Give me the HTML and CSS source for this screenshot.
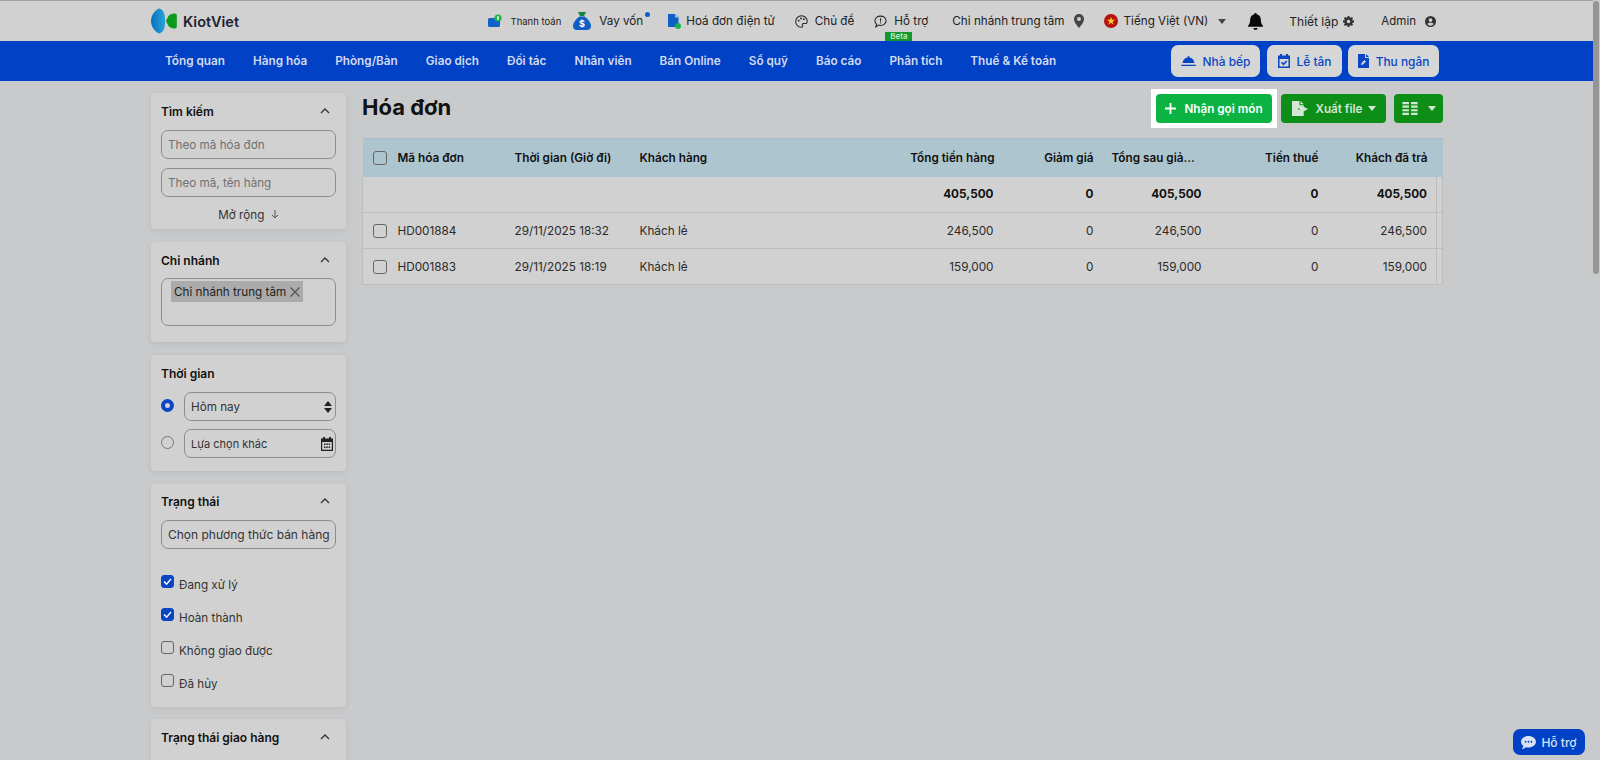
FILE: index.html
```html
<!DOCTYPE html>
<html lang="vi">
<head>
<meta charset="utf-8">
<title>Hóa đơn</title>
<link rel="stylesheet" href="styles.css">
</head>
<body>
<div class="app">
  <header class="topbar">
    <div class="logo">
      <svg class="logo-mark" viewBox="0 0 26 26" width="26" height="26">
        <defs><linearGradient id="lg" x1="0" x2="1" y1="0" y2="0"><stop offset="0" stop-color="#0a6fc0"/><stop offset="1" stop-color="#2aa5d6"/></linearGradient></defs>
        <path d="M8 0.5C3 3 0 8 0 13s3 10 8 12.5c1.200-.3 3-1.200 4-2.500 1.500-2.500 2.200-6 2.200-10S13.500 5.500 12 3C11 1.700 9.200 .8 8 .5z" fill="url(#lg)"/>
        <path d="M24 5.500c1 0 1.800.7 1.800 2v11c0 1.300-.8 2-1.800 2-2 0-5-.5-6.500-2.500L15 13l2.500-5C19 6 22 5.500 24 5.500z" fill="#0b9a1c"/>
      </svg>
      <span class="logo-text">KiotViet</span>
    </div>
    <div class="top-items">
      <a class="ti ti-pay"><svg viewBox="0 0 14 14" width="14" height="14"><rect x="0" y="4" width="12" height="9" rx="1.500" fill="#0f63c8"/><circle cx="10" cy="4" r="3.600" fill="#19b44c"/><rect x="9.200" y="2.300" width="1.600" height="3.400" fill="#fff"/></svg><span class="small">Thanh toán</span></a>
      <a class="ti ti-loan"><svg viewBox="0 0 18 18" width="18" height="18"><path d="M5 0h8l-2 4H7z" fill="#10843a"/><path d="M6.500 4.500h5C15 7 18 11 18 14c0 2.500-1.500 4-4 4H4c-2.500 0-4-1.500-4-4 0-3 3-7 6.500-9.500z" fill="#0d5fc6"/><text x="9" y="15" class="dollar">$</text></svg><span>Vay vốn</span><i class="dot"></i></a>
      <a class="ti ti-inv"><svg viewBox="0 0 14 15" width="14" height="15"><path d="M1 0h7l3.500 3.500V13H1z" fill="#0f5fc6"/><path d="M8 0v3.500h3.500z" fill="#9cc0ee"/><circle cx="11" cy="12" r="3" fill="#19b44c"/></svg><span>Hoá đơn điện tử</span></a>
      <a class="ti ti-theme"><svg viewBox="0 0 14 14" width="13" height="13"><path d="M7 .8C3.500.8.800 3.500.800 7s2.700 6.200 6 6.200c1.300 0 1.700-1 1.200-1.900-.5-1 0-2.100 1.200-2.100h2c1.300 0 2-.9 2-2.200C13.200 3.500 10.500.8 7 .8z" fill="none" stroke="#222" stroke-width="1.100"/><circle cx="4" cy="6" r="1" fill="#222"/><circle cx="6.500" cy="3.700" r="1" fill="#222"/><circle cx="9.500" cy="4.500" r="1" fill="#222"/></svg><span>Chủ đề</span></a>
      <a class="ti ti-help"><svg viewBox="0 0 14 14" width="13" height="13"><path d="M7 1.200c3.300 0 6 2.200 6 5s-2.700 5-6 5c-.8 0-1.500-.1-2.200-.4L2 12.800l.7-2.900C1.600 9 1 7.700 1 6.200c0-2.800 2.700-5 6-5z" fill="none" stroke="#222" stroke-width="1.100"/><rect x="6.500" y="3.500" width="1.100" height="3.600" fill="#222"/><rect x="6.500" y="8" width="1.100" height="1.100" fill="#222"/></svg><span>Hỗ trợ</span><b class="beta">Beta</b></a>
      <a class="ti ti-branch"><span>Chi nhánh trung tâm</span><svg viewBox="0 0 10 14" width="10" height="14"><path d="M5 0a5 5 0 0 0-5 5c0 3.500 5 9 5 9s5-5.500 5-9a5 5 0 0 0-5-5zm0 7a2 2 0 1 1 0-4 2 2 0 0 1 0 4z" fill="#444"/></svg></a>
      <a class="ti ti-lang"><svg viewBox="0 0 14 14" width="14" height="14"><circle cx="7" cy="7" r="7" fill="#b8100f"/><path d="M7 2.800l1 3h3.100L8.600 7.700l1 3L7 8.800l-2.600 1.900 1-3L2.900 5.800H6z" fill="#f2cf2c"/></svg><span>Tiếng Việt (VN)</span><i class="caret"></i></a>
      <a class="ti ti-bell"><svg viewBox="0 0 14 16" width="15" height="17"><path d="M7 0c.7 0 1.100.5 1.100 1.200C10.500 1.700 12 3.700 12 6.200c0 3.300 1 4.700 2 5.800v1H0v-1c1-1.100 2-2.500 2-5.800 0-2.500 1.500-4.500 3.900-5C5.900.5 6.300 0 7 0zM5 14h4a2 2 0 0 1-4 0z" fill="#0a0a0a"/></svg></a>
      <a class="ti ti-set"><span>Thiết lập</span><svg viewBox="0 0 12 12" width="11" height="11"><path d="M5 0h2l.3 1.600 1 .4L9.700 1l1.300 1.400-1 1.300.4 1L12 5v2l-1.600.3-.4 1 1 1.300L9.700 11l-1.400-1-1 .4L7 12H5l-.3-1.600-1-.4-1.400 1L1 9.600l1-1.300-.4-1L0 7V5l1.600-.3.4-1-1-1.300L2.300 1l1.400 1 1-.4zM6 4a2 2 0 1 0 0 4 2 2 0 0 0 0-4z" fill="#333" fill-rule="evenodd"/></svg></a>
      <a class="ti ti-admin"><span>Admin</span><svg viewBox="0 0 12 12" width="11" height="11"><path d="M6 0a6 6 0 1 0 0 12A6 6 0 0 0 6 0zm0 2.500a2 2 0 1 1 0 4 2 2 0 0 1 0-4zm0 8a4.500 4.500 0 0 1-3.500-1.700C3 7.800 4.800 7.400 6 7.400s3 .4 3.500 1.400A4.500 4.500 0 0 1 6 10.500z" fill="#333" fill-rule="evenodd"/></svg></a>
    </div>
  </header>

  <nav class="navbar">
    <a>Tổng quan</a><a>Hàng hóa</a><a>Phòng/Bàn</a><a>Giao dịch</a><a>Đối tác</a><a>Nhân viên</a><a>Bán Online</a><a>Sổ quỹ</a><a>Báo cáo</a><a>Phân tích</a><a>Thuế &amp; Kế toán</a>
    <div class="nav-btns">
      <button class="nbtn nb1"><svg viewBox="0 0 16 12" width="15" height="11"><path d="M8 0c.6 0 1 .4 1 1v.6c3 .4 5.200 2.800 5.500 6H1.500C1.800 4.400 4 2 7 1.600V1c0-.6.4-1 1-1zM0 9.500h16V11H0z" fill="#0a46c4"/></svg>Nhà bếp</button>
      <button class="nbtn nb2"><svg viewBox="0 0 12 14" width="12" height="14"><path d="M2 0h2v1.500h4V0h2v1.500h2V14H0V1.500h2zM1.500 5v7.500h9V5z" fill="#0a46c4" fill-rule="evenodd"/><path d="M3.500 8.300l2 2 3.200-3.300" fill="none" stroke="#0a46c4" stroke-width="1.600"/></svg>Lễ tân</button>
      <button class="nbtn nb3"><svg viewBox="0 0 11 14" width="11" height="14"><path d="M0 0h7v4h4v10H0z" fill="#0a46c4"/><path d="M8 0l3 3H8z" fill="#0a46c4"/><path d="M3 11l.5-2 3-3 1.500 1.500-3 3z" fill="#d8d8d8"/></svg>Thu ngân</button>
    </div>
  </nav>

  <div class="page">
    <aside class="sidebar">
      <section class="card c-search">
        <div class="card-h"><span>Tìm kiếm</span><svg class="chev" viewBox="0 0 10 6" width="10" height="6"><path d="M1 5l4-4 4 4" fill="none" stroke="#333" stroke-width="1.300"/></svg></div>
        <input class="field" placeholder="Theo mã hóa đơn">
        <input class="field" placeholder="Theo mã, tên hàng">
        <div class="more">Mở rộng <svg viewBox="0 0 8 9" width="8" height="9"><path d="M4 0v8M1 5l3 3 3-3" fill="none" stroke="#555" stroke-width="1"/></svg></div>
      </section>

      <section class="card c-branch">
        <div class="card-h"><span>Chi nhánh</span><svg class="chev" viewBox="0 0 10 6" width="10" height="6"><path d="M1 5l4-4 4 4" fill="none" stroke="#333" stroke-width="1.300"/></svg></div>
        <div class="tagbox"><span class="tag">Chi nhánh trung tâm <svg viewBox="0 0 9 9" width="10" height="10"><path d="M.5.5l8 8M8.500.5l-8 8" stroke="#555" stroke-width="1.100"/></svg></span></div>
      </section>

      <section class="card c-time">
        <div class="card-h"><span>Thời gian</span></div>
        <div class="rrow">
          <i class="radio on"></i>
          <div class="sel"><span>Hôm nay</span><svg viewBox="0 0 8 12" width="8" height="12"><path d="M4 0l4 5H0zM4 12L0 7h8z" fill="#222"/></svg></div>
        </div>
        <div class="rrow">
          <i class="radio"></i>
          <div class="sel sel-sm"><span>Lựa chọn khác</span><svg viewBox="0 0 12 14" width="12" height="14"><path d="M2 0h2v1.500h4V0h2v1.500h2V14H0V1.500h2zM1.200 5v7.800h9.600V5z" fill="#222" fill-rule="evenodd"/><path d="M3 6.500h1.500V8H3zM5.300 6.500h1.500V8H5.300zM7.600 6.500h1.500V8H7.600zM3 9.500h1.500V11H3zM5.300 9.500h1.500V11H5.300zM7.600 9.500h1.500V11H7.600z" fill="#222"/></svg></div>
        </div>
      </section>

      <section class="card c-status">
        <div class="card-h"><span>Trạng thái</span><svg class="chev" viewBox="0 0 10 6" width="10" height="6"><path d="M1 5l4-4 4 4" fill="none" stroke="#333" stroke-width="1.300"/></svg></div>
        <div class="field field-d">Chọn phương thức bán hàng</div>
        <ul class="checks">
          <li><i class="cb on"><svg viewBox="0 0 10 8" width="9" height="7"><path d="M1 4l3 3 5-6" fill="none" stroke="#fff" stroke-width="1.700"/></svg></i>Đang xử lý</li>
          <li><i class="cb on"><svg viewBox="0 0 10 8" width="9" height="7"><path d="M1 4l3 3 5-6" fill="none" stroke="#fff" stroke-width="1.700"/></svg></i>Hoàn thành</li>
          <li><i class="cb"></i>Không giao được</li>
          <li><i class="cb"></i>Đã hủy</li>
        </ul>
      </section>

      <section class="card c-ship">
        <div class="card-h"><span>Trạng thái giao hàng</span><svg class="chev" viewBox="0 0 10 6" width="10" height="6"><path d="M1 5l4-4 4 4" fill="none" stroke="#333" stroke-width="1.300"/></svg></div>
      </section>
    </aside>

    <main class="main">
      <div class="titlebar">
        <h1>Hóa đơn</h1>
        <div class="actions">
          <div class="spot"><button class="btn btn-new"><svg viewBox="0 0 11 11" width="11" height="11"><path d="M5.500 0v11M0 5.500h11" stroke="#fff" stroke-width="1.800"/></svg>Nhận gọi món</button></div>
          <button class="btn btn-dim btn-file"><svg viewBox="0 0 16 14" width="17" height="15"><path d="M0 0h7v4h4v2.500H6v2h5V14H0z" fill="#d6e6d6"/><path d="M8 0l3 3H8zM10.500 5l4.500 2.500-4.500 2.500V8.500H7v-2h3.500z" fill="#d6e6d6"/></svg>Xuất file<i class="caret caret-w"></i></button>
          <button class="btn btn-dim btn-cols"><svg viewBox="0 0 14 12" width="16" height="13"><path d="M0 0h6v2H0zM8 0h6v2H8zM0 3.300h6v2H0zM8 3.300h6v2H8zM0 6.600h6v2H0zM8 6.600h6v2H8zM0 10h6v2H0zM8 10h6v2H8z" fill="#d6e6d6"/></svg><i class="caret caret-w"></i></button>
        </div>
      </div>

      <table class="grid">
        <colgroup><col class="w-ck"><col class="w-code"><col class="w-time"><col class="w-cust"><col class="w-total"><col class="w-disc"><col class="w-after"><col class="w-tax"><col class="w-paid"><col class="w-end"></colgroup>
        <thead>
          <tr><th class="ck"><i class="cb"></i></th><th>Mã hóa đơn</th><th>Thời gian (Giờ đi)</th><th>Khách hàng</th><th class="r">Tổng tiền hàng</th><th class="r">Giảm giá</th><th class="after">Tổng sau giả...</th><th class="r">Tiền thuế</th><th class="r" colspan="2">Khách đã trả</th></tr>
        </thead>
        <tbody>
          <tr class="sum"><td></td><td></td><td></td><td></td><td class="r">405,500</td><td class="r">0</td><td class="r">405,500</td><td class="r">0</td><td class="r">405,500</td><td class="end"></td></tr>
          <tr><td class="ck"><i class="cb"></i></td><td>HD001884</td><td>29/11/2025 18:32</td><td>Khách lẻ</td><td class="r">246,500</td><td class="r">0</td><td class="r">246,500</td><td class="r">0</td><td class="r">246,500</td><td class="end"></td></tr>
          <tr><td class="ck"><i class="cb"></i></td><td>HD001883</td><td>29/11/2025 18:19</td><td>Khách lẻ</td><td class="r">159,000</td><td class="r">0</td><td class="r">159,000</td><td class="r">0</td><td class="r">159,000</td><td class="end"></td></tr>
        </tbody>
      </table>
    </main>
  </div>
</div>
<div class="scroll-thumb"></div>
<button class="help"><svg viewBox="0 0 16 14" width="15" height="13"><path d="M8 0c4.400 0 8 2.700 8 6.200s-3.600 6.200-8 6.200c-1 0-2-.1-2.800-.4C4 13 2.300 14 .8 14c.8-.8 1.500-2 1.700-3.200C1 9.700 0 8.100 0 6.200 0 2.700 3.600 0 8 0z" fill="#d9e3f7"/><circle cx="4.800" cy="6.200" r="1" fill="#0a46c4"/><circle cx="8" cy="6.200" r="1" fill="#0a46c4"/><circle cx="11.200" cy="6.200" r="1" fill="#0a46c4"/></svg>Hỗ trợ</button>
</body>
</html>
```

FILE: styles.css
```css
* { box-sizing: border-box; }
html, body { margin: 0; height: 760px; overflow: hidden; }
body { background: #c9cacc; font-family: Inter, "Noto Sans", sans-serif; font-size: 11.700px; color: #1c1c1c; }
.app { width: 1593px; height: 760px; overflow: hidden; }

.topbar { height: 41px; background: #d1d1d1; border-top: 1px solid #a2a2a2; display: flex; align-items: center; padding-left: 151px; padding-right: 157px; }
.logo { display: flex; align-items: center; gap: 6px; }
.logo-text { font-size: 14.500px; font-weight: 600; color: #1b2333; }
.top-items { margin-left: auto; display: flex; align-items: center; }
.ti { display: flex; align-items: center; position: relative; font-size: 11.700px; color: #222; white-space: nowrap; }
.ti .small { font-size: 9.500px; margin-left: 9px; }
.ti-loan { margin-left: 12px; } .ti-loan span { margin-left: 8px; }
.ti-inv { margin-left: 24px; } .ti-inv span { margin-left: 5px; }
.ti-theme { margin-left: 20px; } .ti-theme span { margin-left: 7px; }
.ti-help { margin-left: 20px; } .ti-help span { margin-left: 7px; }
.ti-branch { margin-left: 24px; } .ti-branch svg { margin-left: 9px; }
.ti-lang { margin-left: 20px; } .ti-lang span { margin-left: 6px; }
.ti-bell { margin-left: 22px; }
.ti-set { margin-left: 26px; font-size: 12px; } .ti-set svg { margin-left: 5px; }
.ti-admin { margin-left: 27px; font-size: 11.500px; } .ti-admin svg { margin-left: 9px; }
.dot { position: absolute; right: -7px; top: 0; width: 5px; height: 5px; border-radius: 50%; background: #0d5fc6; }
.dollar { font-size: 9px; font-weight: 700; fill: #fff; text-anchor: middle; font-family: Inter, sans-serif; }
.beta { position: absolute; left: 11px; top: 18px; width: 27px; height: 9px; background: #119a2b; color: #d6ecd8; font-size: 8px; font-weight: 500; line-height: 9px; text-align: center; }
.caret { width: 0; height: 0; border-left: 4.500px solid transparent; border-right: 4.500px solid transparent; border-top: 5px solid #444; margin-left: 10px; }
.caret-w { border-top-color: #d6e6d6; }

.navbar { height: 40px; background: #0041c5; display: flex; align-items: center; padding-left: 165px; padding-right: 154px; gap: 28px; }
.navbar > a { color: #d3daf0; font-weight: 600; font-size: 11.750px; white-space: nowrap; }
.nav-btns { margin-left: auto; display: flex; gap: 7px; }
.nbtn { height: 32px; border: 0; border-radius: 7px; background: #d6d6d6; color: #0a46c4; font: 500 11.900px Inter, sans-serif; display: flex; align-items: center; justify-content: center; gap: 7px; padding: 0; }
.nb1 { width: 89px; } .nb2 { width: 75px; } .nb3 { width: 91px; margin-left: -1px; }

.page { display: flex; gap: 16px; padding: 12px 0 0 151px; }
.sidebar { width: 195px; flex: none; }
.card { background: #d1d1d1; border-radius: 4px; padding: 9px 10px 0; margin-bottom: 13px; box-shadow: 0 2px 6px rgba(0,0,0,.07); }
.card-h { display: flex; justify-content: space-between; align-items: center; height: 18px; font-weight: 600; font-size: 12px; color: #111; padding-right: 6px; margin-bottom: 10px; }
.c-search { height: 136px; }
.c-branch { height: 100px; }
.c-branch .card-h { margin-bottom: 9px; }
.c-time { height: 116px; }
.c-status { height: 223px; margin-bottom: 12px; padding-top: 8px; }
.c-ship { height: 60px; }
.field { display: block; width: 100%; height: 29px; border: 1px solid #8d8d8d; border-radius: 7px; background: transparent; padding: 0 6px; font: 11.700px Inter, sans-serif; color: #333; margin-bottom: 9px; outline: 0; }
.field::placeholder { color: #707070; opacity: 1; }
.field-d { line-height: 27px; white-space: nowrap; font-size: 12px; }
.more { text-align: center; color: #333; margin-top: 11px; }
.more svg { margin-left: 3px; }
.tagbox { height: 48px; border: 1px solid #8d8d8d; border-radius: 7px; padding: 2px 9px; }
.tag { display: inline-flex; align-items: center; gap: 4px; height: 21px; background: #ababab; padding: 0 3px; color: #222; white-space: nowrap; }
.rrow { display: flex; align-items: center; gap: 10px; height: 29px; margin-bottom: 8px; }
.radio { width: 13px; height: 13px; border-radius: 50%; border: 1px solid #777; flex: none; margin-top: -3px; }
.radio.on { border: 4px solid #0a46c4; background: #d1d1d1; }
.sel { flex: 1; height: 29px; border: 1px solid #8d8d8d; border-radius: 7px; display: flex; align-items: center; justify-content: space-between; padding: 0 3px 0 6px; color: #333; }
.sel-sm { font-size: 11px; padding-right: 2px; }
.checks { list-style: none; margin: 19px 0 0; padding: 0; }
.checks li { display: flex; align-items: center; gap: 5px; height: 33px; color: #333; }
.cb { width: 14px; height: 14px; border: 1px solid #666; border-radius: 3px; display: inline-flex; align-items: center; justify-content: center; flex: none; background: transparent; }
.checks .cb { width: 13px; height: 13px; margin-top: -6px; }
.cb.on { background: #0a46c4; border-color: #0a46c4; }

.main { width: 1080px; flex: none; }
.titlebar { display: flex; align-items: flex-start; justify-content: space-between; height: 45px; padding-top: 1px; }
h1 { margin: -1px 0 0; font-size: 22px; line-height: 29px; font-weight: 700; color: #111; }
.actions { display: flex; align-items: flex-start; margin-right: -1px; }
.spot { background: #fff; padding: 5px 5px; margin-top: -5px; }
.btn { height: 29px; border: 0; border-radius: 4px; color: #fff; font: 600 11.700px Inter, sans-serif; display: flex; align-items: center; justify-content: center; padding: 0; }
.btn-new { width: 116px; background: #0bb342; gap: 8px; }
.btn-dim { background: #0d8f17; color: #d6e6d6; }
.btn-file { width: 105px; margin-left: 4px; gap: 7px; }
.btn-file .caret { margin-left: -2px; }
.btn-cols { width: 49px; margin-left: 8px; }

.grid { width: 1080px; table-layout: fixed; border-collapse: collapse; font-size: 11.750px; }
.w-ck { width: 27px; } .w-code { width: 117px; } .w-time { width: 125px; } .w-cust { width: 249px; }
.w-total { width: 122px; } .w-disc { width: 99px; } .w-after { width: 108px; } .w-tax { width: 117px; } .w-paid { width: 110px; } .w-end { width: 6px; }
.grid th { height: 38px; background: #adc5ce; font-weight: 600; color: #111; text-align: left; padding: 0 8px; white-space: nowrap; border-top: 1px solid #a5bec8; }
.grid td { height: 36px; background: #d1d1d1; padding: 0 8px; color: #2a2a2a; border-bottom: 1px solid #bdbdbd; white-space: nowrap; }
.grid td:nth-child(5), .grid td:nth-child(9) { padding-right: 9px; }
.grid .r { text-align: right; }
.grid .after { padding-left: 10px; }
.grid .ck { padding: 0 0 0 10px; }
.grid .cb { vertical-align: middle; }
.grid .sum td { font-weight: 700; color: #111; }
.grid .end { border-left: 1px solid #bdbdbd; padding: 0; }
.grid th:last-child { padding-right: 15px; }
.grid td:first-child { border-left: 1px solid #bdbdbd; }
.grid td:last-child { border-right: 1px solid #bdbdbd; }

.scroll-thumb { position: fixed; right: 1px; top: 1px; width: 6px; height: 273px; background: #959595; border-radius: 3px; }
.help { position: fixed; left: 1513px; top: 729px; width: 72px; height: 26px; border: 0; border-radius: 7px; background: #0041c5; color: #d9e3f7; font: 500 12px Inter, sans-serif; display: flex; align-items: center; justify-content: center; gap: 5px; padding: 0; }
```
